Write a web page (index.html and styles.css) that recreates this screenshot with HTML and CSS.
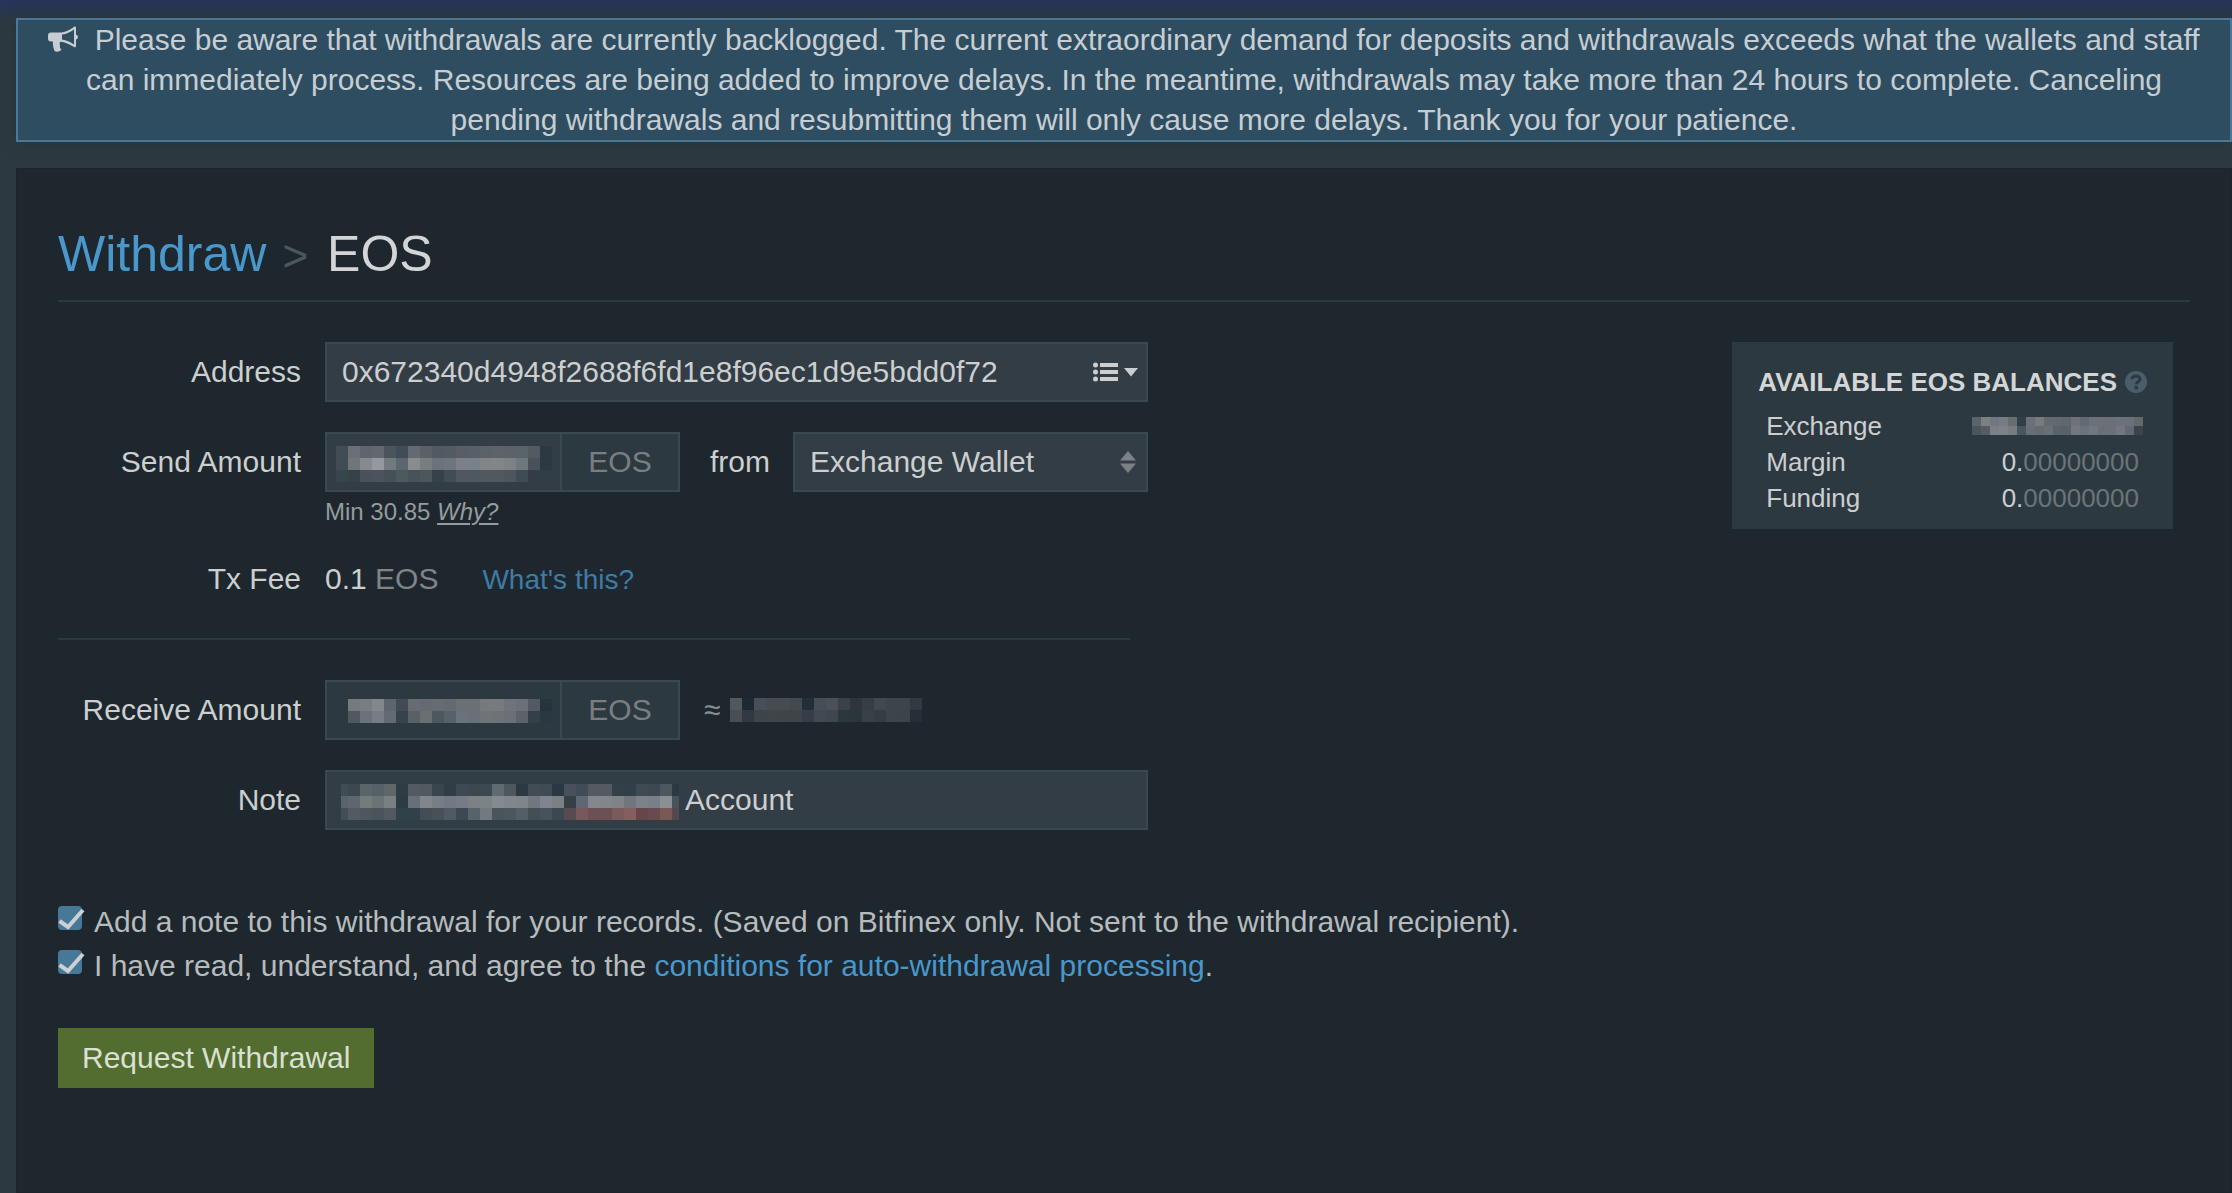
FILE: index.html
```html
<!DOCTYPE html>
<html lang="en">
<head>
<meta charset="utf-8">
<meta name="viewport" content="width=device-width, initial-scale=1">
<title>Withdraw EOS</title>
<link rel="stylesheet" href="styles.css">
</head>
<body>
<div class="page">
  <div class="notice" role="status">
    <svg class="notice-icon" viewBox="0 0 30 26" aria-hidden="true">
      <path d="M3 6.500H12C17 6.500 22 3.800 26 .7Q28 0 28 2V8.500Q30 9 30 11T28 13.500V20Q28 22 26 21C21 18 17 16 12.500 15.700C11 17 12 18.500 12 20C11.500 21.500 12.500 22.800 13.500 23.600C12 26 8.500 26 6.500 25C5.500 22 4.500 19 5 15.500H3Q0 15.500 0 12.500V9.500Q0 6.500 3 6.500ZM14 8.600V13.600C18.500 14.200 22.500 16 26 18.500V3.500C22.500 6 18.500 8 14 8.600Z" fill="currentColor" fill-rule="evenodd"/>
    </svg>
    Please be aware that withdrawals are currently backlogged. The current extraordinary demand for deposits and withdrawals exceeds what the wallets and staff can immediately process. Resources are being added to improve delays. In the meantime, withdrawals may take more than 24 hours to complete. Canceling pending withdrawals and resubmitting them will only cause more delays. Thank you for your patience.
  </div>

  <main class="panel">
    <h1 class="title"><a href="#withdraw">Withdraw</a><span class="crumb">&gt;</span>EOS</h1>

    <div class="columns">
      <form class="form">
        <div class="row">
          <label class="label" for="address">Address</label>
          <div class="field">
            <input class="control" id="address" type="text" value="0x672340d4948f2688f6fd1e8f96ec1d9e5bdd0f72">
            <button class="picker" type="button" aria-label="Saved addresses">
              <svg width="46" height="20" viewBox="0 0 46 20" aria-hidden="true">
                <g fill="currentColor">
                  <circle cx="2.500" cy="3" r="2.500"/><circle cx="2.500" cy="10" r="2.500"/><circle cx="2.500" cy="17" r="2.500"/>
                  <rect x="7" y="1" width="18" height="4"/><rect x="7" y="8" width="18" height="4"/><rect x="7" y="15" width="18" height="4"/>
                  <path d="M31 6H45L38 14.500Z"/>
                </g>
              </svg>
            </button>
          </div>
        </div>

        <div class="row amount-row">
          <label class="label" for="send">Send Amount</label>
          <div class="amount-line">
            <div class="group">
              <div class="field">
                <input class="control" id="send" type="text">
                <div class="mosaic mosaic-send" data-rows="414d56 6b7077 5f656c 62686e 4a545a 414d55 646a71 596066 505a5f 515b61 555f64 566065 5c626a 5d636a 5b6268 59646a 545a62 2d3942|404c56 70757a 858b8d 9499a1 727a7d 5a6670 888c8f 787e80 6c727b 6d757d 7d7f89 78808a 828587 828688 7d8384 6f777e 4b515b 2d3942|37454d 36424a 495259 4b545c 465157 4e585d 48525a 4c565b 36424a 414d55 4e585e 4e585d 505a5e 4f595f 4c565c 414b53"></div>
              </div>
              <span class="unit">EOS</span>
            </div>
            <label class="from" for="wallet">from</label>
            <div class="field">
              <select class="control" id="wallet"><option>Exchange Wallet</option><option>Margin Wallet</option><option>Funding Wallet</option></select>
              <svg class="sorter" width="16" height="22" viewBox="0 0 16 22" aria-hidden="true"><path d="M8 0L16 9.500H0ZM0 12.500H16L8 22Z" fill="currentColor"/></svg>
            </div>
          </div>
          <p class="hint">Min 30.85 <a href="#minimum">Why?</a></p>
        </div>

        <div class="row fee-row">
          <span class="label">Tx Fee</span>
          <div class="fee">0.1 <span class="fee-unit">EOS</span><a href="#fee">What's this?</a></div>
        </div>

        <hr class="rule">

        <div class="row">
          <label class="label" for="receive">Receive Amount</label>
          <div class="amount-line receive-line">
            <div class="group">
              <div class="field">
                <input class="control readonly" id="receive" type="text" readonly>
                <div class="mosaic mosaic-receive" data-rows="757a7e 777d80 81888b 5e646b 414b54 686c72 656a72 656c72 656a72 6b7075 6b7075 767a7d 777b7d 6e7479 6c7079 545962 26343c|505862 6a727b 767d87 646a72 36434b 596168 6a7072 4d585e 566168 6a727b 687078 6e7478 6d7376 697177 5c616a 353f47 2b3842"></div>
              </div>
              <span class="unit">EOS</span>
            </div>
            <span class="approx">≈</span>
            <div class="mosaic" data-rows="52575f 1e2a33 484f55 464c52 464c52 42494f 232e38 464d55 4a5058 3a4148 2c363c 343e44 42494e 3d454b 3d444b 313941|474e55 313941 3e4549 3f4649 3e4548 3d454b 353e46 434951 3f464e 2c363d 2b353b 384148 343c44 3d444b 3c4349 262f37"></div>
          </div>
        </div>

        <div class="row">
          <label class="label" for="note">Note</label>
          <div class="field">
            <input class="control note" id="note" type="text" value="Account">
            <div class="mosaic mosaic-note" data-rows="414d55 3c4750 5a656a 566167 606769 2f3c44 515b61 505a60 3a454d 303d45 3e4951 3b4850 3b4951 5f6a71 4d575c 2b3942 414c55 404c54 2b3842 485159 414c54 545a62 545a62 343f47 30404a 3f4a52 3d4850 4d585e 2a3842|59636a 5f666d 727c7b 6a7375 788082 2d3b43 66707b 808689 777e86 727984 757c85 7c8284 7b8385 838a91 80878a 7f868a 72777f 7e8590 7b8084 353f46 5e6874 84888d 82868b 7d8389 70757e 7c8388 787f8b 8a8f92 495159|444e55 545a62 4d575c 4b545a 505a60 31414a 31414a 434d55 48515a 515a62 3d4852 56636b 737981 4a555a 4c565c 545e66 444e55 48525a 3c4850 584a50 77585b 6d5054 6d5054 7b5a5c 855e60 654649 684b4e 7b5858 54484e"></div>
          </div>
        </div>

        <div class="checks">
          <div class="check">
            <span class="box">
              <input type="checkbox" id="add-note" checked>
              <svg class="tick" viewBox="0 0 27 24" aria-hidden="true"><path d="M1.500 15L10 21L25 4" fill="none" stroke="currentColor" stroke-width="4"/></svg>
            </span>
            <label for="add-note">Add a note to this withdrawal for your records. (Saved on Bitfinex only. Not sent to the withdrawal recipient).</label>
          </div>
          <div class="check">
            <span class="box">
              <input type="checkbox" id="agree" checked>
              <svg class="tick" viewBox="0 0 27 24" aria-hidden="true"><path d="M1.500 15L10 21L25 4" fill="none" stroke="currentColor" stroke-width="4"/></svg>
            </span>
            <label for="agree">I have read, understand, and agree to the <a href="#conditions">conditions for auto-withdrawal processing</a>.</label>
          </div>
        </div>

        <button class="submit" type="submit">Request Withdrawal</button>
      </form>

      <aside class="balances">
        <h2 class="balances-title">AVAILABLE EOS BALANCES
          <svg width="22" height="22" viewBox="0 0 22 22" aria-hidden="true"><circle cx="11" cy="11" r="11" fill="#4a5d6b"/><path d="M7 8.200C7.500 3.700 15.200 3.900 15 8.300C14.800 10.800 11.200 10.600 11.200 13.500" fill="none" stroke="#2d3941" stroke-width="3"/><rect x="9.500" y="15" width="3.500" height="3.500" fill="#2d3941"/></svg>
        </h2>
        <table class="balances-table">
          <tr><th scope="row">Exchange</th><td class="redacted"><div class="mosaic mosaic-balance" data-rows="59646c 7b8083 70777e 757c82 686d72 323d46 6a7178 757b7e 646b70 62696f 60676f 6c7379 626970 6b7178 6b7177 6a7078 6d727a 6b7178 646a6c|4a555d 545d65 7b8085 7d8388 777c7f 4a555c 686f76 646b71 687072 59636b 596269 727780 6c727a 70777d 696f76 6a7077 72777f 63696e 3a444a"></div></td></tr>
          <tr><th scope="row">Margin</th><td>0.<span class="zeros">00000000</span></td></tr>
          <tr><th scope="row">Funding</th><td>0.<span class="zeros">00000000</span></td></tr>
        </table>
      </aside>
    </div>
  </main>
</div>
<script src="mosaic.js"></script>
</body>
</html>
```
FILE: styles.css
```css
* {
  box-sizing: border-box;
}

body {
  margin: 0;
  background: #2d3940;
  color: #cccecf;
  font: 30px/40px "Liberation Sans", Arial, sans-serif;
}

a {
  color: #4a97cb;
  text-decoration: none;
}

.page {
  display: flex;
  flex-direction: column;
  min-height: 100vh;
  padding: 18px 0 0 16px;
  background: linear-gradient(#27345a, #2b3846 18px, #2d3940 24px);
}

.notice {
  margin-bottom: 26px;
  padding: 0 20px;
  border: 2px solid #47799a;
  background: #2e4d60;
  color: #c6cdd3;
  text-align: center;
  box-shadow: 0 2px 12px #2a353b;
}

.notice-icon {
  width: 30px;
  height: 26px;
  margin-right: 8px;
  vertical-align: -2px;
}

.panel {
  flex: 1;
  padding: 56px 42px 40px;
  background: #1d272d;
  box-shadow: inset 0 0 0 1px #1a2429;
}

.title {
  margin: 0 0 40px;
  padding-bottom: 14px;
  border-bottom: 2px solid #2e383f;
  color: #d3d4d5;
  font-size: 50px;
  line-height: 60px;
  font-weight: 400;
}

.crumb {
  margin: 0 19px 0 16px;
  color: #4d565b;
  font-size: 44px;
}

.columns {
  display: flex;
  justify-content: space-between;
  align-items: flex-start;
  gap: 40px;
}

.form {
  flex: 0 1 1090px;
  min-width: 0;
}

.row {
  display: grid;
  grid-template-columns: 243px 1fr;
  column-gap: 24px;
  margin-bottom: 30px;
}

.label {
  line-height: 60px;
  text-align: right;
}

.field {
  display: grid;
}

.field > * {
  grid-area: 1 / 1;
}

.control {
  width: 100%;
  height: 60px;
  padding: 0 15px;
  border: 2px solid #3a4850;
  border-radius: 0;
  outline: 0;
  background: #323d45;
  color: inherit;
  font: inherit;
  appearance: none;
}

.readonly {
  background: #2d3941;
}

.note {
  padding-left: 358px;
}

.picker {
  justify-self: end;
  align-self: center;
  display: flex;
  margin-right: 9px;
  padding: 0;
  border: 0;
  background: none;
  color: inherit;
}

.sorter {
  justify-self: end;
  align-self: center;
  margin-right: 12px;
  color: #7b8285;
  pointer-events: none;
}

.amount-line {
  display: grid;
  grid-template-columns: 355px 1fr 355px;
  align-items: center;
}

.receive-line {
  grid-template-columns: 355px auto 1fr;
}

.from {
  padding-left: 30px;
}

.group {
  display: grid;
  grid-template-columns: 237px 118px;
}

.unit {
  border: solid #3a4850;
  border-width: 2px 2px 2px 0;
  background: #2d3941;
  color: #7a7e80;
  line-height: 56px;
  text-align: center;
}

.hint {
  grid-column: 2;
  margin: 0;
  color: #969b9e;
  font-size: 24px;
  line-height: 40px;
}

.hint a {
  color: inherit;
  font-style: italic;
  text-decoration: underline;
  text-decoration-thickness: 2px;
  text-underline-offset: 3px;
}

.amount-row {
  margin-bottom: 17px;
}

.fee-row {
  margin-bottom: 28px;
}

.fee {
  line-height: 60px;
}

.fee-unit {
  margin-right: 44px;
  color: #7f8488;
}

.fee a {
  color: #3f7ba5;
  font-size: 28px;
}

.rule {
  height: 2px;
  margin: 0 18px 40px 0;
  border: 0;
  background: #2e383f;
}

.approx {
  padding: 0 10px 0 24px;
  color: #878e93;
}

.checks {
  margin: 70px 0 40px;
  color: #b8bbbd;
  line-height: 44px;
  white-space: nowrap;
}

.check {
  display: flex;
  gap: 9px;
}

.box {
  display: grid;
  align-content: start;
  width: 27px;
  padding-top: 6px;
}

.box > * {
  grid-area: 1 / 1;
}

.box input {
  width: 24px;
  height: 24px;
  margin: 0;
  border-radius: 4px;
  background: #487898;
  appearance: none;
}

.tick {
  width: 27px;
  height: 24px;
  color: #cbd0d3;
  pointer-events: none;
}

.submit {
  height: 60px;
  padding: 0 24px;
  border: 0;
  background: #526d2f;
  color: #dbe0d5;
  font: inherit;
}

.balances {
  flex: 0 0 440px;
  margin-right: 17px;
  padding: 22px 26px 13px;
  background: #2d3941;
  font-size: 26px;
  line-height: 36px;
}

.balances-title {
  display: flex;
  align-items: center;
  gap: 8px;
  margin: 0 0 8px;
  color: #d3d5d6;
  font-size: 26px;
  white-space: nowrap;
}

.balances-table {
  width: 100%;
  border-collapse: collapse;
}

.balances-table th,
.balances-table td {
  height: 36px;
  padding: 0 8px;
  font-weight: 400;
  text-align: left;
}

.balances-table td {
  text-align: right;
}

.balances-table .redacted {
  padding-right: 4px;
}

.zeros {
  color: #6b7477;
}

/* Redacted values */
.mosaic {
  display: grid;
  grid-auto-rows: 12px;
  justify-content: start;
  align-content: start;
  pointer-events: none;
}

.mosaic-send {
  margin: 14px 0 0 11px;
}

.mosaic-receive {
  margin: 19px 0 0 23px;
}

.mosaic-note {
  justify-self: start;
  margin: 14px 0 0 11px;
  clip-path: inset(0 5px);
}

.mosaic-balance {
  grid-auto-rows: 9px;
  justify-content: end;
}
```
FILE: mosaic.js
```js
// Draws each redacted value as a grid of flat coloured cells.
document.querySelectorAll('.mosaic').forEach(function (box) {
  var rows = box.dataset.rows.split('|').map(function (row) { return row.split(' '); });
  var size = box.classList.contains('mosaic-balance') ? 9 : 12;
  box.style.gridTemplateColumns = 'repeat(' + rows[0].length + ', ' + size + 'px)';
  rows.forEach(function (row, y) {
    row.forEach(function (color, x) {
      var cell = document.createElement('span');
      cell.style.background = '#' + color;
      cell.style.gridArea = (y + 1) + ' / ' + (x + 1);
      box.appendChild(cell);
    });
  });
});
```
